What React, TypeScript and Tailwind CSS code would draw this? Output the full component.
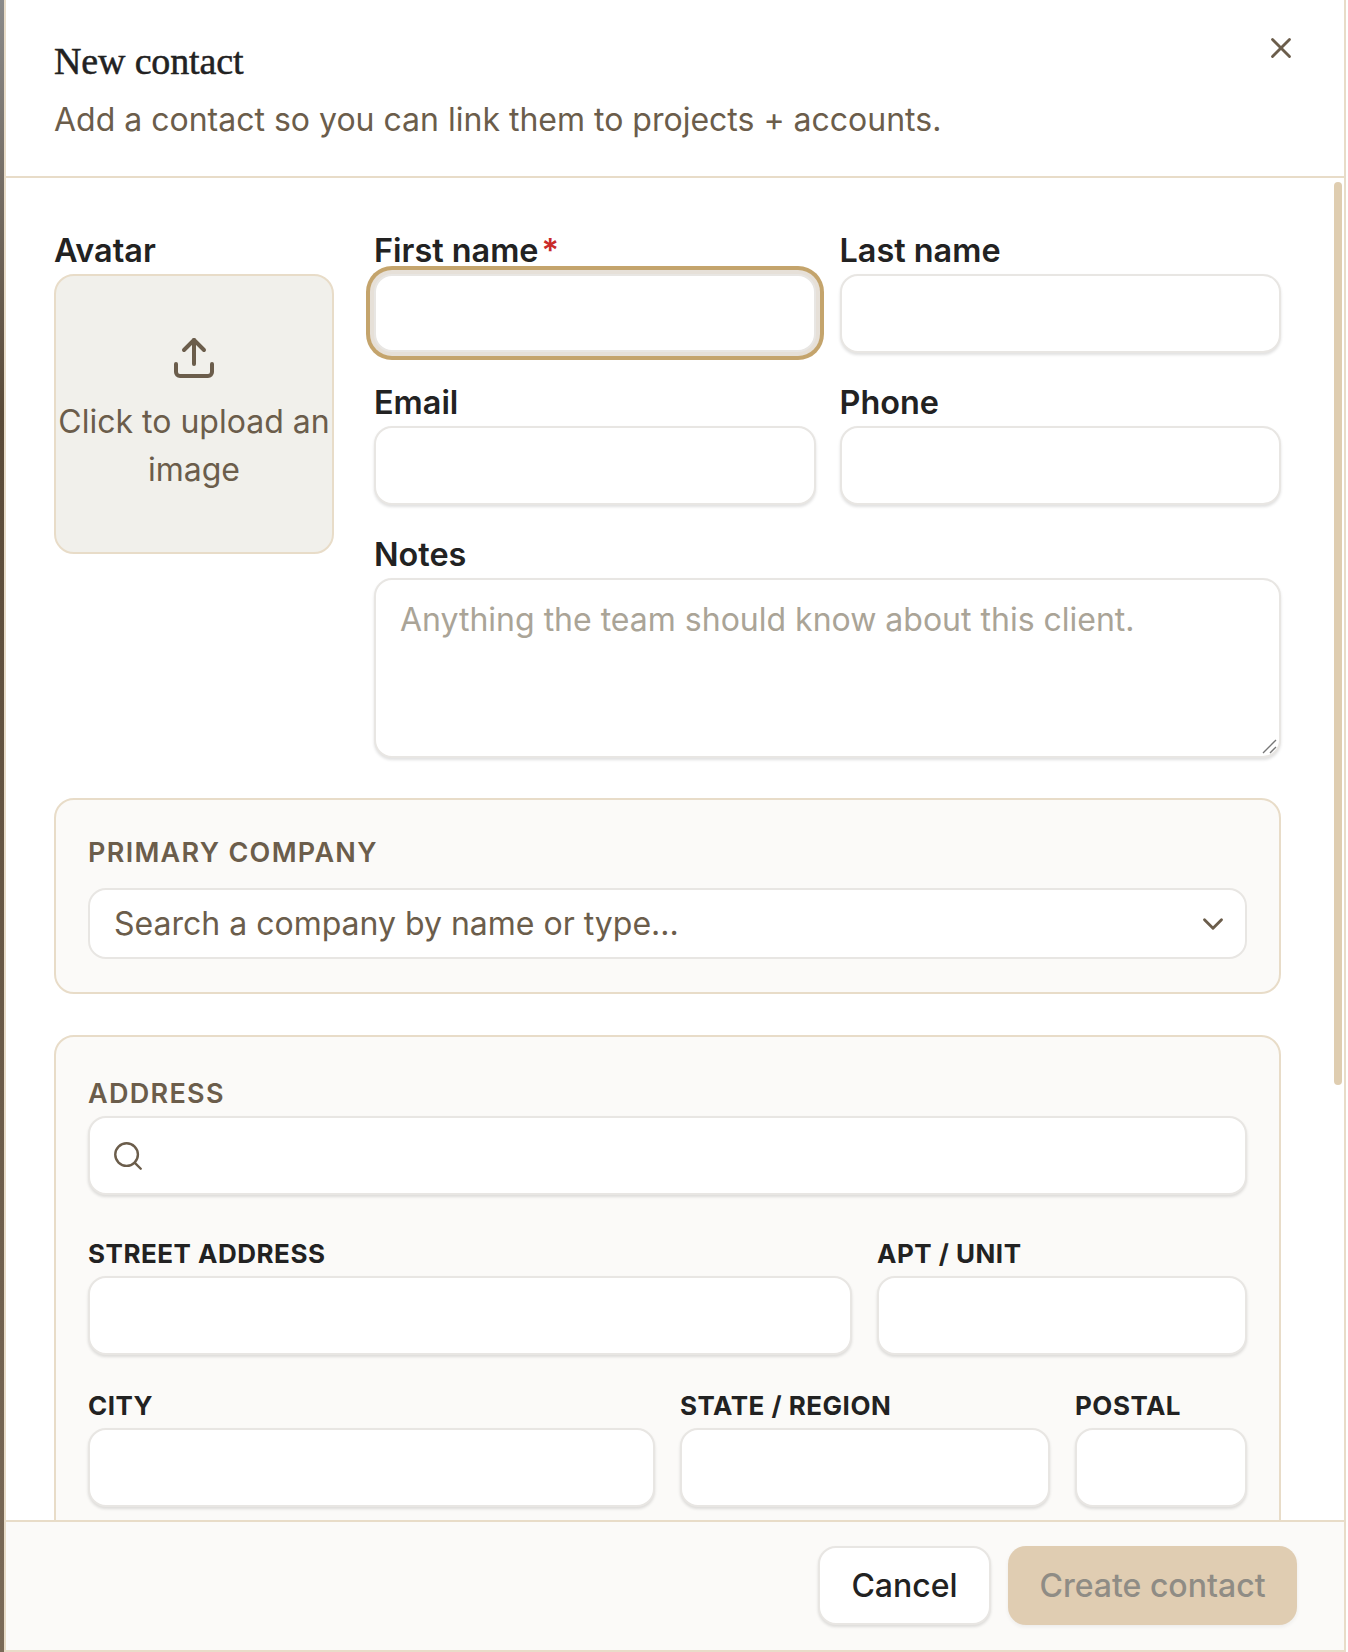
import { ChevronDown, Search, Upload, X } from 'lucide-react'

const inputBox =
  'h-[79px] w-full rounded-[18px] border-2 border-[#e8e6e3] bg-white shadow-[0_2px_3px_rgba(0,0,0,0.12)]'
const labelBig = 'block pt-[1px] text-[32.4px] leading-[36px] font-semibold text-[#222222]'
const labelSmall = 'block text-[26px] leading-[32px] font-bold tracking-[0.5px] text-[#222222]'

function Field({ label, required }: { label: string; required?: boolean }) {
  return (
    <div className="flex flex-col gap-[5px]">
      <label className={labelBig}>
        {label}
        {required && <span className="ml-[3px] text-[#c92a2a]">*</span>}
      </label>
      <div
        className={
          required
            ? 'h-[78px] w-full rounded-[18px] border-2 border-[#e8e6e3] bg-white shadow-[0_0_0_4px_#e6e0d8,0_0_0_8px_#c4a46c]'
            : inputBox
        }
      />
    </div>
  )
}

function SmallField({ label }: { label: string }) {
  return (
    <div className="flex flex-col gap-[6px]">
      <label className={labelSmall}>{label}</label>
      <div className={inputBox} />
    </div>
  )
}

export default function App() {
  return (
    <div className="flex h-[1652px] w-[1348px] overflow-hidden bg-white font-['Inter',sans-serif]">
      <div className="h-full w-[4px] shrink-0 bg-gradient-to-b from-[#8a8a8a] via-[#5a4a38] via-25% to-[#7a6a58]" />

      <div className="relative flex h-full w-[1342px] shrink-0 flex-col border-r-2 border-b-2 border-l-2 border-[#e8dcc8] bg-white">
        <header className="relative h-[178px] shrink-0 border-b-2 border-[#e8dcc8] pt-[39px] pl-[48px]">
          <h2 className="font-['Liberation_Serif',serif] text-[38px] leading-[44px] font-normal tracking-[-0.15px] text-[#222222] [-webkit-text-stroke:0.5px_#222222]">
            New contact
          </h2>
          <p className="mt-[15px] text-[32px] leading-[44px] text-[#6b5d4b]">
            Add a contact so you can link them to projects + accounts.
          </p>
          <button className="absolute top-[31px] right-[46px] text-[#6b5d4b]">
            <X size={34} strokeWidth={2} />
          </button>
        </header>

        <div className="absolute top-[182px] right-[2px] h-[903px] w-[8px] rounded-full bg-[#dfcdb0]" />

        <div className="min-h-0 flex-1 overflow-hidden pt-[54px] pr-[63px] pl-[48px]">
          <div className="flex gap-[40px]">
            <div className="w-[280px] shrink-0">
              <label className={labelBig}>Avatar</label>
              <div className="mt-[5px] flex h-[280px] w-full flex-col items-center justify-center rounded-[20px] border-2 border-[#e8dcc8] bg-[#f1f0eb] text-center text-[32px] leading-[48px] text-[#6b5d4b]">
                <Upload size={48} strokeWidth={2} className="mb-[16px]" />
                <span>Click to upload an image</span>
              </div>
            </div>

            <div className="grid flex-1 grid-cols-2 gap-x-[24px] gap-y-[31px]">
              <Field label="First name" required />
              <Field label="Last name" />
              <Field label="Email" />
              <Field label="Phone" />
              <div className="col-span-2 flex flex-col gap-[5px]">
                <label className={labelBig}>Notes</label>
                <div className="relative h-[180px] w-full rounded-[18px] border-2 border-[#e8e6e3] bg-white px-[24px] pt-[18px] text-[32px] leading-[44px] text-[#aaa497] shadow-[0_2px_3px_rgba(0,0,0,0.12)]">
                  Anything the team should know about this client.
                  <svg
                    className="absolute right-[1px] bottom-[1px]"
                    width="16"
                    height="16"
                    viewBox="0 0 16 16"
                  >
                    <path d="M1 14 14 1M8 14l6-6" stroke="#777" strokeWidth="1.4" />
                  </svg>
                </div>
              </div>
            </div>
          </div>

          <section className="mt-[40px] h-[196px] rounded-[20px] border-2 border-[#e8dcc8] bg-[#fbfaf8] px-[32px] pt-[37px]">
            <label className="block text-[27px] leading-[32px] font-semibold tracking-[1.3px] text-[#6b5d4b]">
              PRIMARY COMPANY
            </label>
            <div className="mt-[19px] flex h-[71px] items-center justify-between rounded-[18px] border-2 border-[#e8e6e3] bg-white pr-[15px] pl-[24px] text-[32px] text-[#6b5d4b]">
              <span>Search a company by name or type...</span>
              <ChevronDown size={34} strokeWidth={2} />
            </div>
          </section>

          <section className="mt-[41px] rounded-[20px] border-2 border-[#e8dcc8] bg-[#fbfaf8] px-[32px] pt-[41px] pb-[40px]">
            <label className="block text-[27px] leading-[32px] font-semibold tracking-[1.3px] text-[#6b5d4b]">
              ADDRESS
            </label>
            <div className={`mt-[6px] flex items-center pl-[21px] text-[#6b5d4b] ${inputBox}`}>
              <Search size={34} strokeWidth={1.7} />
            </div>

            <div className="mt-[43px] grid grid-cols-[764px_370px] gap-x-[25px]">
              <SmallField label="STREET ADDRESS" />
              <SmallField label="APT / UNIT" />
            </div>

            <div className="mt-[35px] grid grid-cols-[567px_370px_172px] gap-x-[25px]">
              <SmallField label="CITY" />
              <SmallField label="STATE / REGION" />
              <SmallField label="POSTAL" />
            </div>
          </section>
        </div>

        <footer className="flex h-[130px] shrink-0 items-start justify-end gap-[17px] border-t-2 border-[#e8dcc8] bg-[#fbfaf8] pt-[24px] pr-[47px]">
          <button className="h-[79px] w-[173px] rounded-[18px] border-2 border-[#e8e6e3] bg-white pt-[1px] text-[32px] font-medium text-[#222222] shadow-[0_2px_3px_rgba(0,0,0,0.12)]">
            Cancel
          </button>
          <button className="h-[79px] w-[289px] rounded-[18px] bg-[#e0cdb2] pt-[1px] text-[32px] font-medium text-[#8f8c85] shadow-[0_2px_4px_rgba(0,0,0,0.06)]">
            Create contact
          </button>
        </footer>
      </div>
    </div>
  )
}
